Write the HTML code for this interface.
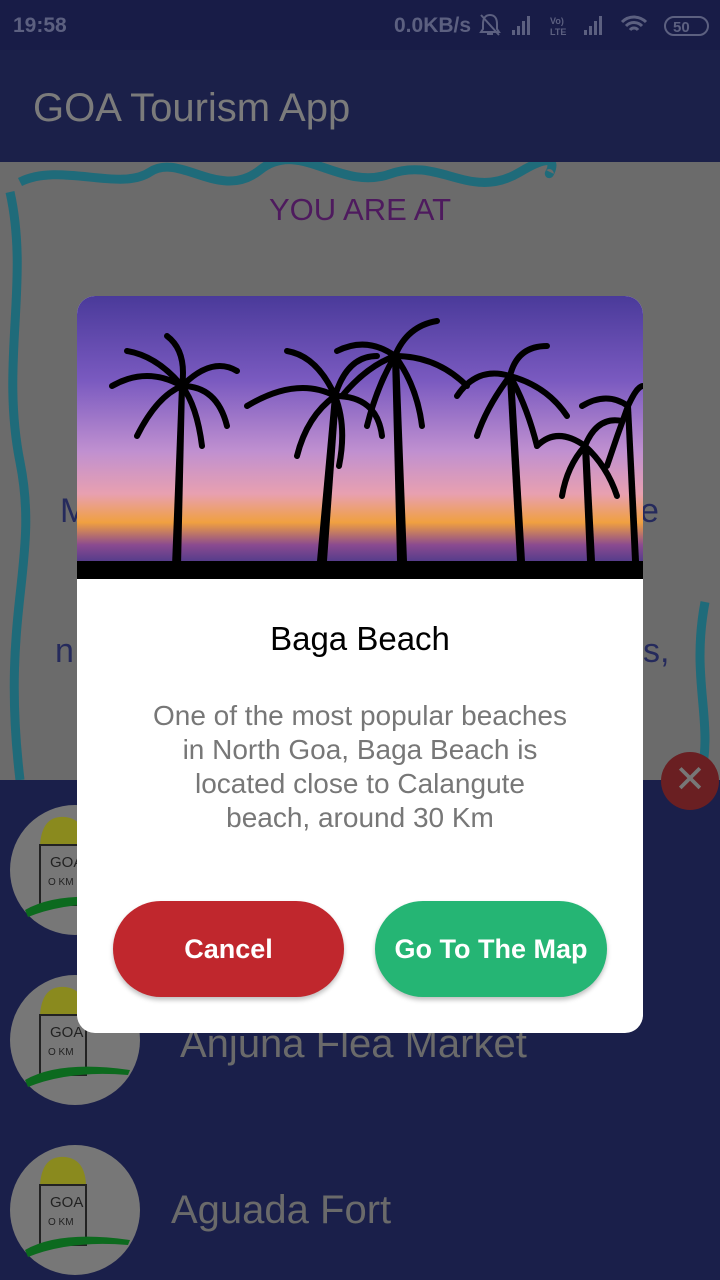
<!DOCTYPE html>
<html><head><meta charset="utf-8"><style>
*{margin:0;padding:0;box-sizing:border-box}
body{width:720px;height:1280px;overflow:hidden;position:relative;font-family:"Liberation Sans",sans-serif;background:#6b6b6b}
.sb{position:absolute;top:0;left:0;width:720px;height:50px;background:#181c47;color:#5c6080;font-weight:bold;font-size:21px}
.tb{position:absolute;top:50px;left:0;width:720px;height:112px;background:#1b2049;color:#7b7b7b;font-size:40px;padding:36px 0 0 33px}
.content{position:absolute;top:162px;left:0;width:720px;height:618px;background:#6b6b6b;overflow:hidden}
.list{position:absolute;top:780px;left:0;width:720px;height:500px;background:#1a1f4a}
.av{position:absolute;left:10px;width:130px;height:130px}
.item{position:absolute;color:#6a6a6a;font-size:40px}
.dlg{position:absolute;left:77px;top:296px;width:566px;height:737px;background:#fff;border-radius:18px;overflow:hidden}
.img{height:283px;background:linear-gradient(#4a3a9a 0%,#7a5ac0 30%,#c090d0 55%,#e8a0b0 70%,#f0a040 80%,#8a4a90 88%,#4a3a8a 95%,#000 100%);position:relative}
.t{position:absolute;top:324px;width:100%;text-align:center;font-size:33px;color:#000}
.d{position:absolute;top:403px;width:100%;text-align:center;font-size:28px;line-height:34px;color:#777}
.btn{position:absolute;top:605px;height:96px;border-radius:48px;color:#fff;font-weight:bold;font-size:27px;text-align:center;line-height:96px;box-shadow:0 3px 5px rgba(0,0,0,.25)}
</style></head><body>
<div class="sb"><span style="position:absolute;left:13px;top:14px">19:58</span><span style="position:absolute;left:394px;top:14px">0.0KB/s</span>
<svg style="position:absolute;left:478px;top:12px" width="24" height="26"><path d="M12 3c-5 0-7 4-7 9v5l-2 3h18l-2-3v-5c0-5-2-9-7-9zM9 22h6M3 3l18 20" stroke="#5c6080" stroke-width="2" fill="none"/></svg>
<svg style="position:absolute;left:510px;top:14px" width="200" height="24"><g fill="#5c6080"><rect x="2" y="16" width="3" height="5"/><rect x="7" y="12" width="3" height="9"/><rect x="12" y="7" width="3" height="14"/><rect x="17" y="2" width="3" height="19"/><rect x="74" y="16" width="3" height="5"/><rect x="79" y="12" width="3" height="9"/><rect x="84" y="7" width="3" height="14"/><rect x="89" y="2" width="3" height="19"/></g><text x="40" y="10" font-size="9" fill="#5c6080">Vo)</text><text x="40" y="21" font-size="9" fill="#5c6080">LTE</text><path d="M112 8a17 17 0 0 1 24 0M116 12a11 11 0 0 1 16 0M120 16a5 5 0 0 1 8 0" stroke="#5c6080" stroke-width="3" fill="none"/><rect x="155" y="3" width="43" height="18" rx="9" fill="none" stroke="#5c6080" stroke-width="2"/><text x="163" y="18" font-size="15" font-weight="bold" fill="#5c6080">50</text></svg></div>
<div class="tb">GOA Tourism App</div>
<div class="content">
<svg width="720" height="618" style="position:absolute;top:0;left:0"><g stroke="#1f6b7a" stroke-width="9" fill="none"><path d="M20 20 C60 0 120 30 150 10 S220 40 260 8 S340 30 390 12 S470 40 520 10 S545 20 550 10"/><path d="M10 30 C30 120 0 200 20 300 S0 450 20 618"/><path d="M705 440 C690 520 715 560 700 618"/></g></svg>
<div style="position:absolute;top:30px;width:100%;text-align:center;color:#4e1a5e;font-size:31px">YOU ARE AT</div>
<div style="position:absolute;top:330px;left:60px;color:#252a5c;font-size:34px">M</div><div style="position:absolute;top:330px;left:640px;color:#252a5c;font-size:34px">e</div>
<div style="position:absolute;top:470px;left:55px;color:#252a5c;font-size:34px">n</div><div style="position:absolute;top:470px;left:643px;color:#252a5c;font-size:34px">s,</div>
</div>
<div class="list">
<svg class="av" style="top:25px" viewBox="0 0 130 130"><circle cx="65" cy="65" r="65" fill="#777"/><path d="M30 40 Q32 10 55 12 Q75 14 76 40Z" fill="#8a8a1e"/><path d="M30 40 H76 V100 H30Z" fill="#777" stroke="#222" stroke-width="2"/><text x="40" y="62" font-size="15" fill="#222">GOA</text><text x="38" y="80" font-size="10" fill="#222">O KM</text><path d="M15 105 Q50 85 120 95 L118 100 Q60 95 18 112Z" fill="#0c6a1e"/></svg>
<svg class="av" style="top:195px" viewBox="0 0 130 130"><circle cx="65" cy="65" r="65" fill="#777"/><path d="M30 40 Q32 10 55 12 Q75 14 76 40Z" fill="#8a8a1e"/><path d="M30 40 H76 V100 H30Z" fill="#777" stroke="#222" stroke-width="2"/><text x="40" y="62" font-size="15" fill="#222">GOA</text><text x="38" y="80" font-size="10" fill="#222">O KM</text><path d="M15 105 Q50 85 120 95 L118 100 Q60 95 18 112Z" fill="#0c6a1e"/></svg>
<svg class="av" style="top:365px" viewBox="0 0 130 130"><circle cx="65" cy="65" r="65" fill="#777"/><path d="M30 40 Q32 10 55 12 Q75 14 76 40Z" fill="#8a8a1e"/><path d="M30 40 H76 V100 H30Z" fill="#777" stroke="#222" stroke-width="2"/><text x="40" y="62" font-size="15" fill="#222">GOA</text><text x="38" y="80" font-size="10" fill="#222">O KM</text><path d="M15 105 Q50 85 120 95 L118 100 Q60 95 18 112Z" fill="#0c6a1e"/></svg>
<div class="item" style="left:180px;top:242px">Anjuna Flea Market</div>
<div class="item" style="left:171px;top:408px">Aguada Fort</div>
</div>
<div style="position:absolute;left:661px;top:752px;width:58px;height:58px;border-radius:50%;background:#6a1f22;color:#777;font-size:38px;text-align:center;line-height:56px">✕</div>
<div class="dlg">
<div class="img"><svg width="566" height="283" style="position:absolute;top:0;left:0"><g fill="#000"><rect x="0" y="265" width="566" height="18"/><path d="M95 270 L102 90 L108 90 L104 270Z"/><path d="M240 265 L255 100 L262 100 L250 265Z"/><path d="M320 265 L315 60 L322 60 L330 265Z"/><path d="M440 265 L430 80 L437 80 L448 265Z"/><path d="M510 265 L505 150 L512 150 L518 265Z"/><path d="M555 265 L548 110 L554 110 L562 265Z"/></g>
<g stroke="#000" stroke-width="6" fill="none" stroke-linecap="round">
<path d="M105 90 Q70 70 35 90M105 90 Q80 60 50 55M105 90 Q110 55 90 40M105 90 Q135 60 160 75M105 90 Q140 90 150 130M105 90 Q80 100 60 140M105 90 Q120 110 125 150"/>
<path d="M258 100 Q220 80 170 110M258 100 Q240 60 210 55M258 100 Q270 60 300 60M258 100 Q300 100 305 140M258 100 Q230 120 220 160M258 100 Q270 130 262 170"/>
<path d="M318 60 Q290 40 260 55M318 60 Q330 30 360 25M318 60 Q360 60 390 90M318 60 Q300 90 290 130M318 60 Q340 90 345 130M318 60 Q290 70 265 100"/>
<path d="M433 80 Q400 70 380 100M433 80 Q440 50 470 50M433 80 Q470 90 490 120M433 80 Q410 110 400 140M433 80 Q450 110 460 150"/>
<path d="M508 150 Q480 130 460 150M508 150 Q520 120 545 125M508 150 Q490 170 485 200M508 150 Q530 170 540 200"/>
<path d="M551 110 Q530 95 505 110M551 110 Q560 90 566 90M551 110 Q540 140 530 170"/>
</g></svg></div>
<div class="t">Baga Beach</div>
<div class="d">One of the most popular beaches<br>in North Goa, Baga Beach is<br>located close to Calangute<br>beach, around 30 Km</div>
<div class="btn" style="left:36px;width:231px;background:#c0272d">Cancel</div>
<div class="btn" style="left:298px;width:232px;background:#25b574">Go To The Map</div>
</div>
</body></html>
